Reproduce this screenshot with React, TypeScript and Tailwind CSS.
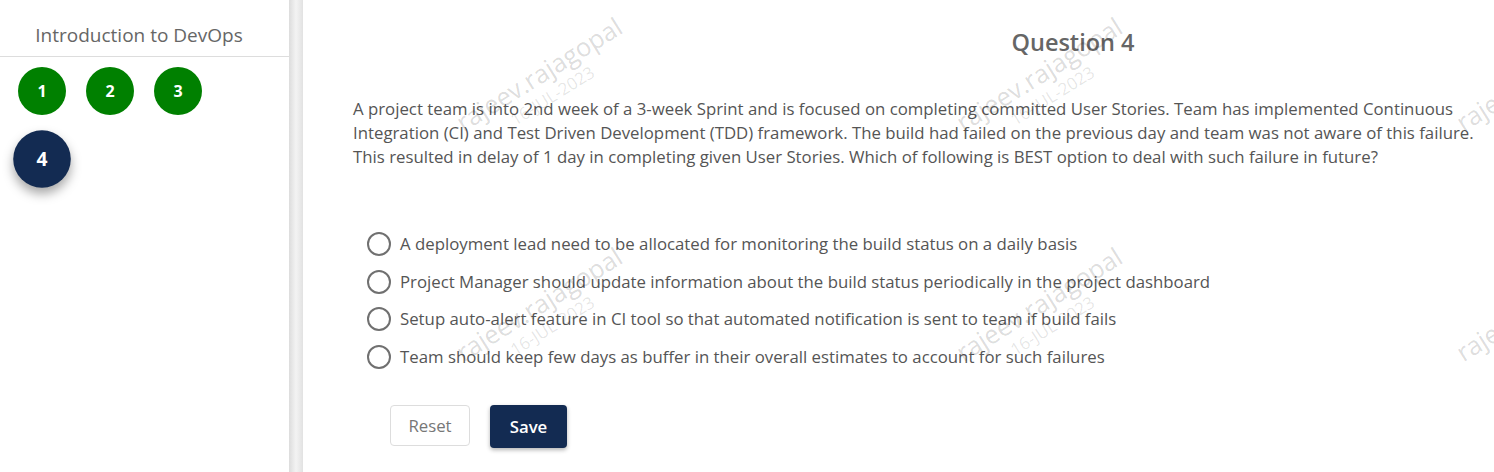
import React, { useState } from 'react';

const questions = [
  { id: 1, answered: true },
  { id: 2, answered: true },
  { id: 3, answered: true },
  { id: 4, answered: false },
];

const options = [
  'A deployment lead need to be allocated for monitoring the build status on a daily basis',
  'Project Manager should update information about the build status periodically in the project dashboard',
  'Setup auto-alert feature in CI tool so that automated notification is sent to team if build fails',
  'Team should keep few days as buffer in their overall estimates to account for such failures',
];

// watermark tiles, positions relative to the main panel
const tiles = [
  'left-[122px] top-[58px]',
  'left-[622px] top-[58px]',
  'left-[1122px] top-[58px]',
  'left-[122px] top-[288px]',
  'left-[622px] top-[288px]',
  'left-[1122px] top-[288px]',
  'left-[122px] top-[518px]',
  'left-[622px] top-[518px]',
  'left-[1122px] top-[518px]',
];

function Watermark() {
  return (
    <div className="pointer-events-none absolute inset-0 overflow-hidden">
      {tiles.map((pos) => (
        <div
          key={pos}
          className={`absolute ${pos} w-[240px] rotate-[-32deg] text-center select-none`}
        >
          <div className="text-[25.5px] leading-[28px] text-[rgba(0,0,0,0.15)]">rajeev.rajagopal</div>
          <div className="text-[17px] leading-[24px] text-[rgba(0,0,0,0.11)]">16-JUL-2023</div>
        </div>
      ))}
    </div>
  );
}

export default function App() {
  const [current] = useState(4);
  const [selected, setSelected] = useState<number | null>(null);

  return (
    <div className="flex h-screen w-full bg-white font-['Open_Sans',sans-serif]">
      {/* Sidebar */}
      <aside className="w-[289px] shrink-0 bg-white">
        <div className="h-[57px] border-b border-[#dddddd] pt-[22px] pr-[11px] text-center text-[19px] leading-[27px] text-[#666666]">
          Introduction to DevOps
        </div>
        <div className="grid grid-cols-[repeat(3,68px)] pl-2">
          {questions.map((q) => {
            const active = q.id === current;
            return (
              <div key={q.id} className="flex items-center justify-center p-[10px]">
                <button
                  className={
                    active
                      ? 'flex h-12 w-12 scale-[1.2] items-center justify-center rounded-full bg-[#132b52] text-[16px] font-bold text-white shadow-[0_5px_9px_rgba(0,0,0,0.35)]'
                      : 'flex h-12 w-12 items-center justify-center rounded-full bg-[#008000] text-[16px] font-bold text-white'
                  }
                >
                  {q.id}
                </button>
              </div>
            );
          })}
        </div>
      </aside>

      {/* Divider */}
      <div className="w-[14px] shrink-0 bg-linear-to-r from-[#dcdcdc] via-[#f3f3f3] to-[#e2e2e2]" />

      {/* Main */}
      <main className="relative flex-1 pl-[50px] pr-[6px]">
        <h2 className="pt-[26px] pl-[305px] text-center text-[23.5px] font-semibold leading-[32px] text-[#666666]">
          Question 4
        </h2>
        <p className="mt-[39px] text-[16.8px] leading-[24px] text-[#555555]">
          A project team is into 2nd week of a 3-week Sprint and is focused on completing committed User Stories. Team has implemented Continuous Integration (CI) and Test Driven Development (TDD) framework. The build had failed on the previous day and team was not aware of this failure. This resulted in delay of 1 day in completing given User Stories. Which of following is BEST option to deal with such failure in future?
        </p>

        <div className="mt-[56px] flex flex-col pl-[14px]">
          {options.map((opt, i) => (
            <label key={i} className="flex h-[37.7px] cursor-pointer items-center gap-[9px]">
              <span className="flex h-[24px] w-[24px] shrink-0 items-center justify-center rounded-full border-2 border-[#707070]">
                {selected === i && <span className="h-3 w-3 rounded-full bg-[#132b52]" />}
              </span>
              <input
                type="radio"
                name="answer"
                className="hidden"
                checked={selected === i}
                onChange={() => setSelected(i)}
              />
              <span className="text-[16.8px] leading-[24px] text-[#555555]">{opt}</span>
            </label>
          ))}
        </div>

        <div className="mt-[29px] flex gap-5 pl-[37px]">
          <button
            onClick={() => setSelected(null)}
            className="h-[41px] w-[80px] rounded-[4px] border border-[#dddddd] bg-white text-[16.8px] text-[#777777]"
          >
            Reset
          </button>
          <button className="h-[43px] w-[77px] rounded-[4px] bg-[#132b52] text-[16.8px] font-semibold text-white shadow-[0_2px_4px_rgba(0,0,0,0.3)]">
            Save
          </button>
        </div>

        <Watermark />
      </main>
    </div>
  );
}
